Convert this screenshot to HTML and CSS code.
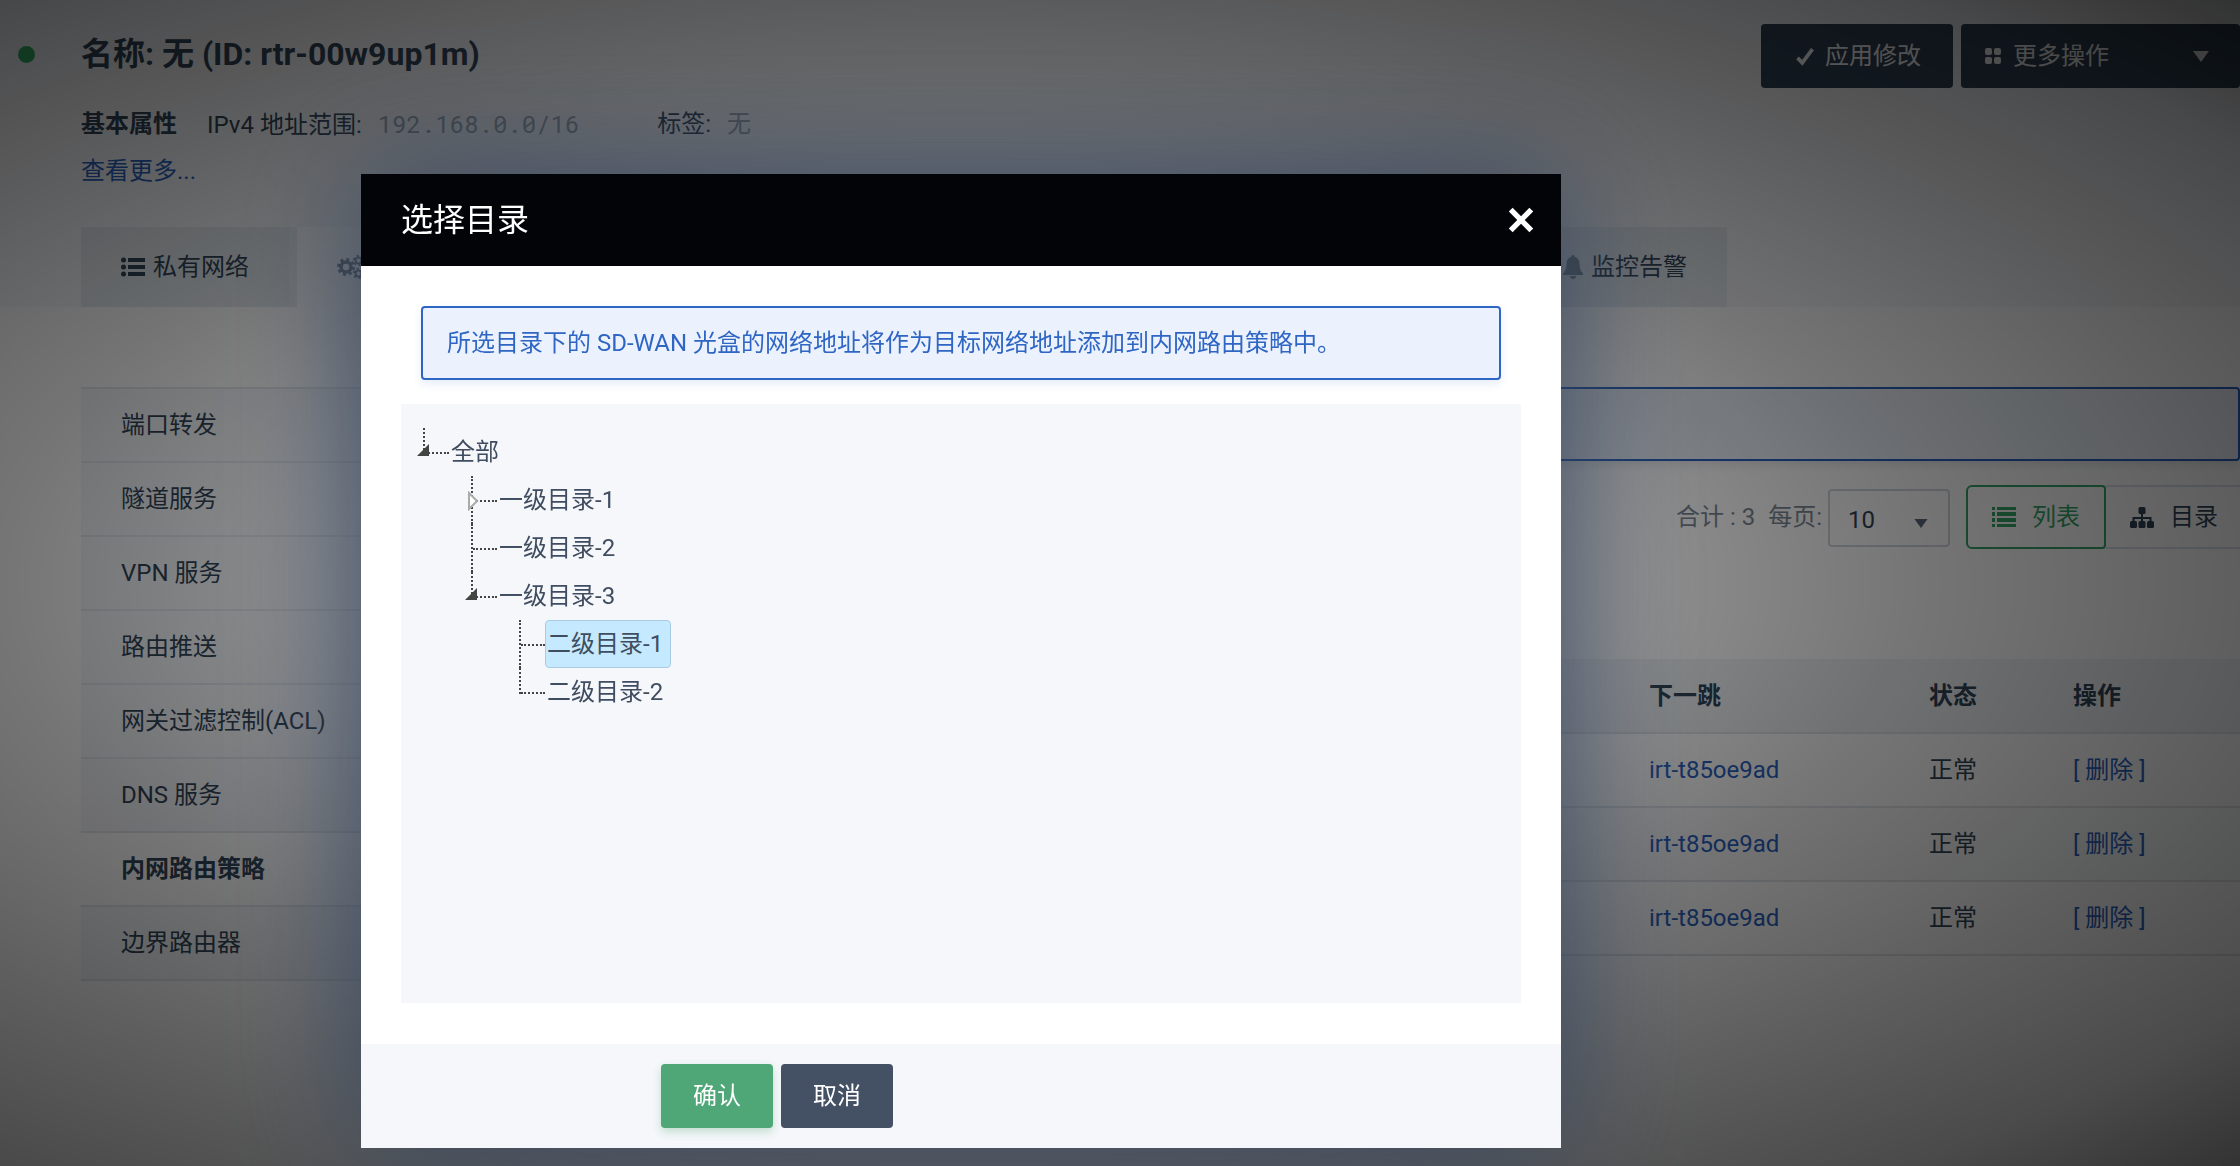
FILE: index.html
```html
<!DOCTYPE html>
<html lang="zh-CN">
<head>
<meta charset="utf-8">
<title>路由器 - 选择目录</title>
<link rel="stylesheet" href="styles.css">
</head>
<body>
<div class="page">
  <header class="head">
    <div class="head-top">
      <h1 class="title"><span class="dot"></span>名称: 无 (ID: rtr-00w9up1m)</h1>
      <div class="actions">
        <button class="btn dark" type="button"><svg class="i-check" viewBox="0 0 16 16"><path d="M2 9.500L5.800 13.500L14 2.500"/></svg>应用修改</button>
        <button class="btn dark more" type="button"><svg class="i-grid" viewBox="0 0 16 16"><rect width="7" height="7" rx="2"/><rect x="9" width="7" height="7" rx="2"/><rect y="9" width="7" height="7" rx="2"/><rect x="9" y="9" width="7" height="7" rx="2"/></svg>更多操作<svg class="i-caret" viewBox="0 0 16 11"><path d="M0 0h16l-8 11z"/></svg></button>
      </div>
    </div>
    <div class="props">
      <strong>基本属性</strong>
      <span class="prop">IPv4 地址范围: <code>192.168.0.0/16</code></span>
      <span class="prop">标签: <em>无</em></span>
    </div>
    <a class="see-more" href="#">查看更多...</a>
    <nav class="tabs">
      <a class="tab" href="#"><svg class="i-list" viewBox="0 0 24 20"><circle cx="2.500" cy="3" r="2.500"/><circle cx="2.500" cy="10" r="2.500"/><circle cx="2.500" cy="17" r="2.500"/><path d="M7 1h17v4H7zM7 8h17v4H7zM7 15h17v4H7z"/></svg>私有网络</a>
      <a class="tab current" href="#" aria-label="管理配置"><svg class="i-gears" viewBox="0 0 28 24"><g fill="none"><circle cx="9" cy="12" r="5" stroke-width="3.500"/><circle cx="9" cy="12" r="7.500" stroke-width="3" stroke-dasharray="3 2.890"/><circle cx="21.500" cy="5.500" r="3" stroke-width="2"/><circle cx="21.500" cy="5.500" r="4.700" stroke-width="2" stroke-dasharray="2.200 2.720"/><circle cx="21.500" cy="18.500" r="3" stroke-width="2"/><circle cx="21.500" cy="18.500" r="4.700" stroke-width="2" stroke-dasharray="2.200 2.720"/></g></svg></a>
      <a class="tab" href="#"><svg class="i-bell" viewBox="0 0 20 24"><path d="M10 0c1.100 0 1.600.8 1.600 1.800C14.800 2.700 16.500 5.200 16.500 8.500c0 6 1.500 8 3.500 10v1.500H0v-1.500c2-2 3.500-4 3.500-10C3.500 5.200 5.200 2.700 8.400 1.800 8.400.8 8.900 0 10 0zM7 21h6c0 1.700-1.300 3-3 3s-3-1.300-3-3z"/></svg>监控告警</a>
    </nav>
  </header>
  <main class="main">
    <ul class="side">
      <li><a href="#">端口转发</a></li>
      <li><a href="#">隧道服务</a></li>
      <li><a href="#">VPN 服务</a></li>
      <li><a href="#">路由推送</a></li>
      <li><a href="#">网关过滤控制(ACL)</a></li>
      <li><a href="#">DNS 服务</a></li>
      <li><a class="on" href="#">内网路由策略</a></li>
      <li><a href="#">边界路由器</a></li>
    </ul>
    <section class="content">
      <div class="note"></div>
      <div class="toolbar">
        <span>合计 : 3</span>
        <label for="size">每页:</label>
        <span class="pick"><select id="size"><option>10</option><option>20</option></select><svg viewBox="0 0 16 11"><path d="M0 0h16l-8 11z"/></svg></span>
        <div class="switch">
          <button class="sw active" type="button"><svg class="i-rows" viewBox="0 0 24 20"><path d="M0 0h3v3H0zM5 0h19v3H5zM0 5h3v4H0zM5 5h19v4H5zM0 11h3v4H0zM5 11h19v4H5zM0 17h3v3H0zM5 17h19v3H5z"/></svg>列表</button>
          <button class="sw" type="button"><svg class="i-tree" viewBox="0 0 24 21"><rect x="8.500" width="7" height="7" rx="1.500"/><rect y="14" width="7" height="7" rx="1.500"/><rect x="8.500" y="14" width="7" height="7" rx="1.500"/><rect x="17" y="14" width="7" height="7" rx="1.500"/><path d="M11 6h2v9h-2zM2.500 10h19v5h-2v-3h-15v3h-2z"/></svg>目录</button>
        </div>
      </div>
      <table class="grid">
        <colgroup><col><col class="c-hop"><col class="c-state"><col class="c-op"></colgroup>
        <thead><tr><td></td><th>下一跳</th><th>状态</th><th>操作</th></tr></thead>
        <tbody>
          <tr><td></td><td><a href="#">irt-t85oe9ad</a></td><td>正常</td><td><a href="#">[ 删除 ]</a></td></tr>
          <tr><td></td><td><a href="#">irt-t85oe9ad</a></td><td>正常</td><td><a href="#">[ 删除 ]</a></td></tr>
          <tr><td></td><td><a href="#">irt-t85oe9ad</a></td><td>正常</td><td><a href="#">[ 删除 ]</a></td></tr>
        </tbody>
      </table>
    </section>
  </main>
</div>

<div class="backdrop">
  <div class="modal" role="dialog" aria-modal="true" aria-labelledby="dlg">
    <div class="modal-head">
      <h2 id="dlg">选择目录</h2>
      <button class="close" type="button" aria-label="关闭"><svg viewBox="0 0 24 24"><path d="M2.500 2.500l19 19M21.500 2.500l-19 19"/></svg></button>
    </div>
    <div class="modal-body">
      <p class="alert">所选目录下的 SD-WAN 光盒的网络地址将作为目标网络地址添加到内网路由策略中。</p>
      <div class="tree">
        <ul>
          <li class="last open"><svg class="knob" viewBox="0 0 14 14"><path class="solid" d="M1 13L13 1v12z"/></svg><a href="#">全部</a>
            <ul>
              <li><svg class="knob closed" viewBox="0 0 14 20"><path class="hollow" d="M3 2v16l8-8z"/></svg><a href="#">一级目录-1</a></li>
              <li><a href="#">一级目录-2</a></li>
              <li class="last open"><svg class="knob" viewBox="0 0 14 14"><path class="solid" d="M1 13L13 1v12z"/></svg><a href="#">一级目录-3</a>
                <ul>
                  <li><a class="picked" href="#">二级目录-1</a></li>
                  <li class="last"><a href="#">二级目录-2</a></li>
                </ul>
              </li>
            </ul>
          </li>
        </ul>
      </div>
    </div>
    <div class="modal-foot">
      <button class="btn ok" type="button">确认</button>
      <button class="btn cancel" type="button">取消</button>
    </div>
  </div>
</div>
</body>
</html>
```
FILE: styles.css
```css
* { box-sizing: border-box; }

html, body { height: 100%; }

body {
  margin: 0;
  overflow: hidden;
  font: 24px/36px Roboto, "Noto Sans CJK SC", sans-serif;
  color: #324558;
  background: #fff;
}

a { color: #2b62c0; text-decoration: none; }
ul { list-style: none; margin: 0; padding: 0; }
svg { flex: none; fill: currentColor; }
button, select { font: inherit; color: inherit; cursor: pointer; }

/* page header */
.head {
  padding: 24px 0 0 81px;
  background: #f5f7fa;
}
.head-top { display: flex; justify-content: space-between; height: 64px; }
.title {
  display: flex;
  align-items: center;
  height: 60px;
  margin: 0 0 0 -63px;
  font-size: 32px;
  font-weight: 700;
}
.dot {
  width: 17px;
  height: 17px;
  margin-right: 46px;
  border-radius: 50%;
  background: #36b36a;
}
.actions { display: flex; gap: 8px; }
.btn {
  display: flex;
  align-items: center;
  justify-content: center;
  height: 64px;
  padding: 0 32px;
  border: 0;
  border-radius: 4px;
  color: #fff;
}
.dark { padding-left: 34px; background: #324558; }
.i-check { width: 20px; height: 20px; margin-right: 10px; }
.i-check path { fill: none; stroke: currentColor; stroke-width: 3; }
.more { width: 279px; padding: 0 31px 0 24px; justify-content: flex-start; }
.i-grid { width: 16px; height: 16px; margin-right: 12px; }
.i-caret { width: 16px; height: 11px; margin-left: auto; }

.props { display: flex; padding-top: 18px; }
.props strong { margin-right: 30px; }
.prop { margin-right: 78px; }
.prop code {
  margin-left: 10px;
  font: 24px/36px "Roboto Mono", "DejaVu Sans Mono", monospace;
  color: #96a1ad;
}
.prop em { margin-left: 10px; font-style: normal; color: #96a1ad; }
.see-more { display: block; width: max-content; margin-top: 10px; }

.tabs { display: flex; margin: 38px 513px 0 0; }
.tab {
  display: flex;
  align-items: center;
  gap: 8px;
  height: 80px;
  padding: 0 40px;
  color: #324558;
  background: #e4eaef;
}
.tab:first-child { border-right: 8px solid #eaeff3; }
.tab.current { flex: 1; background: #fff; color: #7c8895; }
.i-list { width: 24px; height: 20px; }
.i-gears { width: 28px; height: 24px; stroke: currentColor; }
.i-bell { width: 20px; height: 24px; color: #7c8895; }

/* page body */
.main {
  display: grid;
  grid-template-columns: 340px 1fr;
  gap: 40px;
  padding: 80px 0 0 81px;
}
.side { border-top: 2px solid #e3e8ed; }
.side a {
  display: flex;
  align-items: center;
  height: 74px;
  padding-left: 40px;
  border-bottom: 2px solid #e3e8ed;
  background: #f5f7fa;
  color: #324558;
}
.side .on { background: #fff; font-weight: 700; }

.note {
  height: 74px;
  border: 2px solid #2b62c0;
  border-radius: 4px;
  background: #ecf2fa;
  box-shadow: 0 4px 8px rgba(50, 69, 88, .12);
}
.toolbar {
  display: flex;
  align-items: center;
  justify-content: flex-end;
  height: 64px;
  margin: 24px 0 110px;
  overflow: hidden;
  color: #7c8895;
}
.toolbar label { margin: 0 6px 0 13px; }
.pick { position: relative; margin: 2px 16px 0 0; }
.pick select {
  display: block;
  appearance: none;
  width: 122px;
  height: 58px;
  padding: 4px 18px 0;
  border: 2px solid #d0d6dd;
  border-radius: 4px;
  background: none;
  color: #324558;
}
.pick svg { position: absolute; right: 21px; top: 30px; width: 16px; height: 9px; color: #5b6a79; }
.switch { display: flex; }
.sw {
  display: flex;
  align-items: center;
  gap: 16px;
  height: 64px;
  padding: 0 22px 0 24px;
  border: 2px solid #dbe1e8;
  border-width: 2px 0;
  background: none;
  color: #324558;
}
.sw.active {
  padding: 0 24px;
  border: 2px solid #36a56a;
  border-radius: 6px 4px 4px 6px;
  color: #36a56a;
}
.i-rows { width: 24px; height: 20px; }
.i-tree { width: 24px; height: 21px; }

.grid { width: 100%; border-collapse: collapse; table-layout: fixed; }
.c-hop { width: 280px; }
.c-state { width: 144px; }
.c-op { width: 167px; }
.grid td, .grid th {
  height: 74px;
  padding: 0;
  text-align: left;
  border-bottom: 2px solid #e0e5ea;
}
.grid thead tr { background: #f0f3f6; }
.grid tbody tr:nth-child(even) { background: #fafbfc; }

/* dialog */
.backdrop {
  position: fixed;
  inset: 0;
  padding: 174px 318px 0 0;
  background: radial-gradient(1810px 824px at 961px 50%, rgba(0, 0, 0, .3) 0, rgba(0, 0, 0, .42) 34%, rgba(0, 0, 0, .54) 53%, rgba(0, 0, 0, .63) 71%, rgba(0, 0, 0, .71) 88%, rgba(0, 0, 0, .8) 100%);
}
.modal {
  width: 1200px;
  margin: 0 auto;
  background: #fff;
  box-shadow: 0 0 120px #35465f;
}
.modal-head {
  display: flex;
  align-items: center;
  justify-content: space-between;
  height: 92px;
  padding: 0 27px 0 40px;
  background: #030408;
  color: #fff;
}
.modal-head h2 { margin: 0; font-size: 32px; font-weight: 400; }
.close { display: flex; padding: 0; border: 0; background: none; }
.close svg { width: 26px; height: 26px; }
.close path { fill: none; stroke: currentColor; stroke-width: 5; }
.modal-body { padding: 40px 40px 41px; }
.alert {
  margin: 0 20px 24px;
  padding: 17px 24px;
  border: 2px solid #2f66c4;
  border-radius: 4px;
  background: #ebf2fd;
  color: #2f66c4;
  box-shadow: 0 4px 8px rgba(47, 102, 196, .12);
}
.tree {
  min-height: 599px;
  padding-top: 24px;
  background: #f6f7fb;
}
.tree li {
  position: relative;
  padding-left: 48px;
}
.tree li::before {
  content: "";
  position: absolute;
  left: 22px;
  top: 0;
  height: 100%;
  border-left: 2px dotted #444;
}
.tree li.last::before { height: 26px; }
.tree li::after {
  content: "";
  position: absolute;
  left: 24px;
  top: 24px;
  width: 24px;
  border-top: 2px dotted #444;
}
.tree a {
  display: block;
  position: relative;
  width: max-content;
  height: 48px;
  padding: 5px 7px 0 1px;
  border: 1px solid transparent;
  border-radius: 4px;
  color: #3f4d60;
}
.tree .picked { background: #c5e9fe; border-color: #a9cde2; }
.knob { position: absolute; left: 15px; top: 15px; z-index: 1; width: 14px; height: 14px; }
.knob.closed { width: 14px; height: 20px; left: 17px; }
.knob .solid { fill: #444; }
.knob .hollow { fill: #fff; stroke: #aaa; stroke-width: 2; }
.modal-foot {
  display: flex;
  gap: 8px;
  padding: 20px 300px;
  background: #f5f7fa;
}
.ok { background: #4fa777; box-shadow: 0 4px 8px rgba(79, 167, 119, .3); }
.cancel { background: #445164; }
```
